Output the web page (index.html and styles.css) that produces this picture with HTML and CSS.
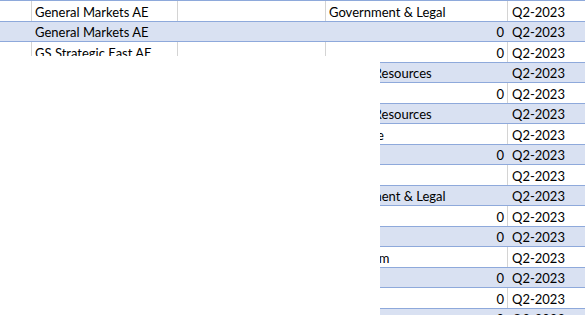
FILE: index.html
```html
<!DOCTYPE html>
<html>
<head>
<meta charset="utf-8">
<link rel="stylesheet" href="styles.css">
</head>
<body>
<div class="page">
  <div class="sheet">
    <div class="row"><div class="c a"></div><div class="c b">General Markets AE</div><div class="c cc"></div><div class="c d">Government &amp; Legal</div><div class="c e">Q2-2023</div></div>
    <div class="row alt"><div class="c a"></div><div class="c b">General Markets AE</div><div class="c cc"></div><div class="c d num">0</div><div class="c e">Q2-2023</div></div>
    <div class="row"><div class="c a"></div><div class="c b">GS Strategic East AE</div><div class="c cc"></div><div class="c d num">0</div><div class="c e">Q2-2023</div></div>
    <div class="row alt"><div class="c a"></div><div class="c b">GS Strategic East AE</div><div class="c cc"></div><div class="c d">Human Resources</div><div class="c e">Q2-2023</div></div>
    <div class="row"><div class="c a"></div><div class="c b">GS Strategic East AE</div><div class="c cc"></div><div class="c d num">0</div><div class="c e">Q2-2023</div></div>
    <div class="row alt"><div class="c a"></div><div class="c b">GS Strategic West AE</div><div class="c cc"></div><div class="c d">Human Resources</div><div class="c e">Q2-2023</div></div>
    <div class="row"><div class="c a"></div><div class="c b">GS Strategic West AE</div><div class="c cc"></div><div class="c d">Insurance</div><div class="c e">Q2-2023</div></div>
    <div class="row alt"><div class="c a"></div><div class="c b">GS Strategic West AE</div><div class="c cc"></div><div class="c d num">0</div><div class="c e">Q2-2023</div></div>
    <div class="row"><div class="c a"></div><div class="c b">Healthcare AE</div><div class="c cc"></div><div class="c d"></div><div class="c e">Q2-2023</div></div>
    <div class="row alt"><div class="c a"></div><div class="c b">Healthcare AE</div><div class="c cc"></div><div class="c d">Government &amp; Legal</div><div class="c e">Q2-2023</div></div>
    <div class="row"><div class="c a"></div><div class="c b">Healthcare AE</div><div class="c cc"></div><div class="c d num">0</div><div class="c e">Q2-2023</div></div>
    <div class="row alt"><div class="c a"></div><div class="c b">Mid Market AE</div><div class="c cc"></div><div class="c d num">0</div><div class="c e">Q2-2023</div></div>
    <div class="row"><div class="c a"></div><div class="c b">Mid Market AE</div><div class="c cc"></div><div class="c d">Ecosystem</div><div class="c e">Q2-2023</div></div>
    <div class="row alt"><div class="c a"></div><div class="c b">Mid Market AE</div><div class="c cc"></div><div class="c d num">0</div><div class="c e">Q2-2023</div></div>
    <div class="row"><div class="c a"></div><div class="c b">Mid Market AE</div><div class="c cc"></div><div class="c d num">0</div><div class="c e">Q2-2023</div></div>
    <div class="row alt"><div class="c a"></div><div class="c b">Mid Market AE</div><div class="c cc"></div><div class="c d num">0</div><div class="c e">Q2-2023</div></div>
  </div>
  <div class="cover"></div>
</div>
</body>
</html>
```
FILE: styles.css
```css
html, body {
  margin: 0;
  padding: 0;
  background: #ffffff;
}
.page {
  position: relative;
  width: 585px;
  height: 315px;
  overflow: hidden;
  font-family: Lato, "Liberation Sans", sans-serif;
  font-size: 13px;
  color: #000000;
}
.sheet {
  border-top: 1px solid #8ea9db;
  width: 620px;
}
.row {
  display: grid;
  grid-template-columns: 32px 146px 148px 182px 112px;
  height: 20.53px;
  box-sizing: border-box;
  border-bottom: 1px solid #8ea9db;
  background: #ffffff;
}
.row.alt {
  background: #d9e1f2;
}
.c {
  box-sizing: border-box;
  border-right: 1px solid #d4d4d4;
  padding: 0 3px 1px 3px;
  display: flex;
  align-items: flex-end;
  white-space: nowrap;
  overflow: hidden;
  line-height: 16px;
}
.e {
  padding-left: 4px;
}
.row.alt .c {
  border-right-color: transparent;
}
.num {
  justify-content: flex-end;
}
.cover {
  position: absolute;
  left: 0;
  top: 56px;
  width: 380px;
  bottom: 0;
  background: #ffffff;
}
```
